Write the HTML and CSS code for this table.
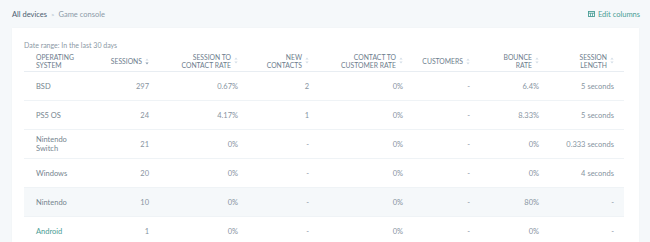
FILE: index.html
```html
<!DOCTYPE html>
<html>
<head>
<meta charset="utf-8">
<link rel="stylesheet" href="styles.css">
</head>
<body>
<div class="topbar">
  <div class="crumbs"><span class="crumb-main">All devices</span><span class="sep">&gt;</span><span class="crumb-cur">Game console</span></div>
  <div class="edit"><svg class="edit-icon" width="7" height="6" viewBox="0 0 7 6"><rect x="0.5" y="0.5" width="6" height="5" fill="none" stroke="currentColor" stroke-width="0.9"/><line x1="0.5" y1="2.2" x2="6.5" y2="2.2" stroke="currentColor" stroke-width="0.9"/><line x1="2.5" y1="2.2" x2="2.5" y2="5.5" stroke="currentColor" stroke-width="0.8"/><line x1="4.5" y1="2.2" x2="4.5" y2="5.5" stroke="currentColor" stroke-width="0.8"/></svg>Edit columns</div>
</div>
<div class="card">
  <div class="range">Date range: In the last 30 days</div>
  <table class="grid">
    <colgroup>
      <col class="c1"><col class="c2"><col class="c3"><col class="c4"><col class="c5"><col class="c6"><col class="c7"><col class="c8">
    </colgroup>
    <thead>
      <tr>
        <th class="left">OPERATING<br>SYSTEM</th>
        <th><span class="hd">SESSIONS</span><svg class="sort" width="4" height="7" viewBox="0 0 4 7"><path d="M2 0.5 L3.6 2.6 H0.4Z" fill="#d3dde7"/><path d="M2 6.5 L3.6 4.4 H0.4Z" fill="#8a9db0"/></svg></th>
        <th><span class="hd">SESSION TO<br>CONTACT RATE</span><svg class="sort" width="4" height="7" viewBox="0 0 4 7"><path d="M2 0.5 L3.6 2.6 H0.4Z" fill="#d3dde7"/><path d="M2 6.5 L3.6 4.4 H0.4Z" fill="#d3dde7"/></svg></th>
        <th><span class="hd">NEW<br>CONTACTS</span><svg class="sort" width="4" height="7" viewBox="0 0 4 7"><path d="M2 0.5 L3.6 2.6 H0.4Z" fill="#d3dde7"/><path d="M2 6.5 L3.6 4.4 H0.4Z" fill="#d3dde7"/></svg></th>
        <th><span class="hd">CONTACT TO<br>CUSTOMER RATE</span><svg class="sort" width="4" height="7" viewBox="0 0 4 7"><path d="M2 0.5 L3.6 2.6 H0.4Z" fill="#d3dde7"/><path d="M2 6.5 L3.6 4.4 H0.4Z" fill="#d3dde7"/></svg></th>
        <th><span class="hd">CUSTOMERS</span><svg class="sort" width="4" height="7" viewBox="0 0 4 7"><path d="M2 0.5 L3.6 2.6 H0.4Z" fill="#d3dde7"/><path d="M2 6.5 L3.6 4.4 H0.4Z" fill="#d3dde7"/></svg></th>
        <th><span class="hd">BOUNCE<br>RATE</span><svg class="sort" width="4" height="7" viewBox="0 0 4 7"><path d="M2 0.5 L3.6 2.6 H0.4Z" fill="#d3dde7"/><path d="M2 6.5 L3.6 4.4 H0.4Z" fill="#d3dde7"/></svg></th>
        <th><span class="hd">SESSION<br>LENGTH</span><svg class="sort" width="4" height="7" viewBox="0 0 4 7"><path d="M2 0.5 L3.6 2.6 H0.4Z" fill="#d3dde7"/><path d="M2 6.5 L3.6 4.4 H0.4Z" fill="#d3dde7"/></svg></th>
      </tr>
    </thead>
    <tbody>
      <tr><td class="left">BSD</td><td>297</td><td>0.67%</td><td>2</td><td>0%</td><td>-</td><td>6.4%</td><td>5 seconds</td></tr>
      <tr><td class="left">PS5 OS</td><td>24</td><td>4.17%</td><td>1</td><td>0%</td><td>-</td><td>8.33%</td><td>5 seconds</td></tr>
      <tr><td class="left">Nintendo<br>Switch</td><td>21</td><td>0%</td><td>-</td><td>0%</td><td>-</td><td>0%</td><td>0.333 seconds</td></tr>
      <tr><td class="left">Windows</td><td>20</td><td>0%</td><td>-</td><td>0%</td><td>-</td><td>0%</td><td>4 seconds</td></tr>
      <tr class="hover"><td class="left">Nintendo</td><td>10</td><td>0%</td><td>-</td><td>0%</td><td>-</td><td>80%</td><td>-</td></tr>
      <tr><td class="left link">Android</td><td>1</td><td>0%</td><td>-</td><td>0%</td><td>-</td><td>0%</td><td>-</td></tr>
    </tbody>
  </table>
</div>
</body>
</html>
```
FILE: styles.css
```css
html, body {
  margin: 0;
  padding: 0;
}
body {
  background: #f5f8fa;
  font-family: Lato, "Open Sans", sans-serif;
  color: #33475b;
  overflow: hidden;
  height: 242px;
}
.topbar {
  display: flex;
  justify-content: space-between;
  align-items: center;
  padding: 7px 10px 0 12px;
  height: 14px;
  font-size: 7.5px;
}
.crumbs {
  display: flex;
  gap: 4px;
  align-items: center;
}
.crumb-main { color: #4a5d70; }
.sep { color: #a9b8c7; font-size: 6px; }
.crumb-cur { color: #8c9aa8; }
.edit {
  display: flex;
  align-items: center;
  gap: 3px;
  color: #4a9d95;
  font-size: 7.5px;
}
.edit-icon { display: block; }
.card {
  margin: 7px 11px 0 12px;
  background: #fff;
  padding: 12px 15px 0 12px;
  height: 202px;
  overflow: hidden;
  box-shadow: 0 0 2px rgba(0,0,0,0.03);
}
.range {
  font-size: 7px;
  color: #8b98a5;
  height: 10px;
  line-height: 10px;
}
.grid {
  border-collapse: collapse;
  table-layout: fixed;
  width: 600px;
  font-size: 7.5px;
}
.c1 { width: 66px; }
.c2 { width: 69px; }
.c3 { width: 89px; }
.c4 { width: 71px; }
.c5 { width: 94px; }
.c6 { width: 67px; }
.c7 { width: 69px; }
.c8 { width: 75px; }
.grid th {
  font-weight: 400;
  font-size: 6.8px;
  color: #6d7d8d;
  text-align: right;
  line-height: 8px;
  height: 21px;
  padding: 0 10px 0 0;
  vertical-align: middle;
  border-bottom: 1px solid #e8edf2;
  white-space: nowrap;
}
.grid th .hd {
  display: inline-block;
  vertical-align: middle;
}
.grid th .sort {
  display: inline-block;
  vertical-align: middle;
  margin-left: 3px;
}
.grid th.left, .grid td.left {
  text-align: left;
  padding-left: 12px;
  padding-right: 0;
}
.grid td {
  text-align: right;
  color: #87949f;
  height: 28px;
  padding: 0 10px 0 0;
  line-height: 9px;
  border-bottom: 1px solid #eff3f6;
  white-space: nowrap;
  vertical-align: middle;
}
.grid td.left { color: #76858f; }
.grid td.link { color: #4a9d95; }
.grid tr.hover td { background: #f5f8fa; }
```
